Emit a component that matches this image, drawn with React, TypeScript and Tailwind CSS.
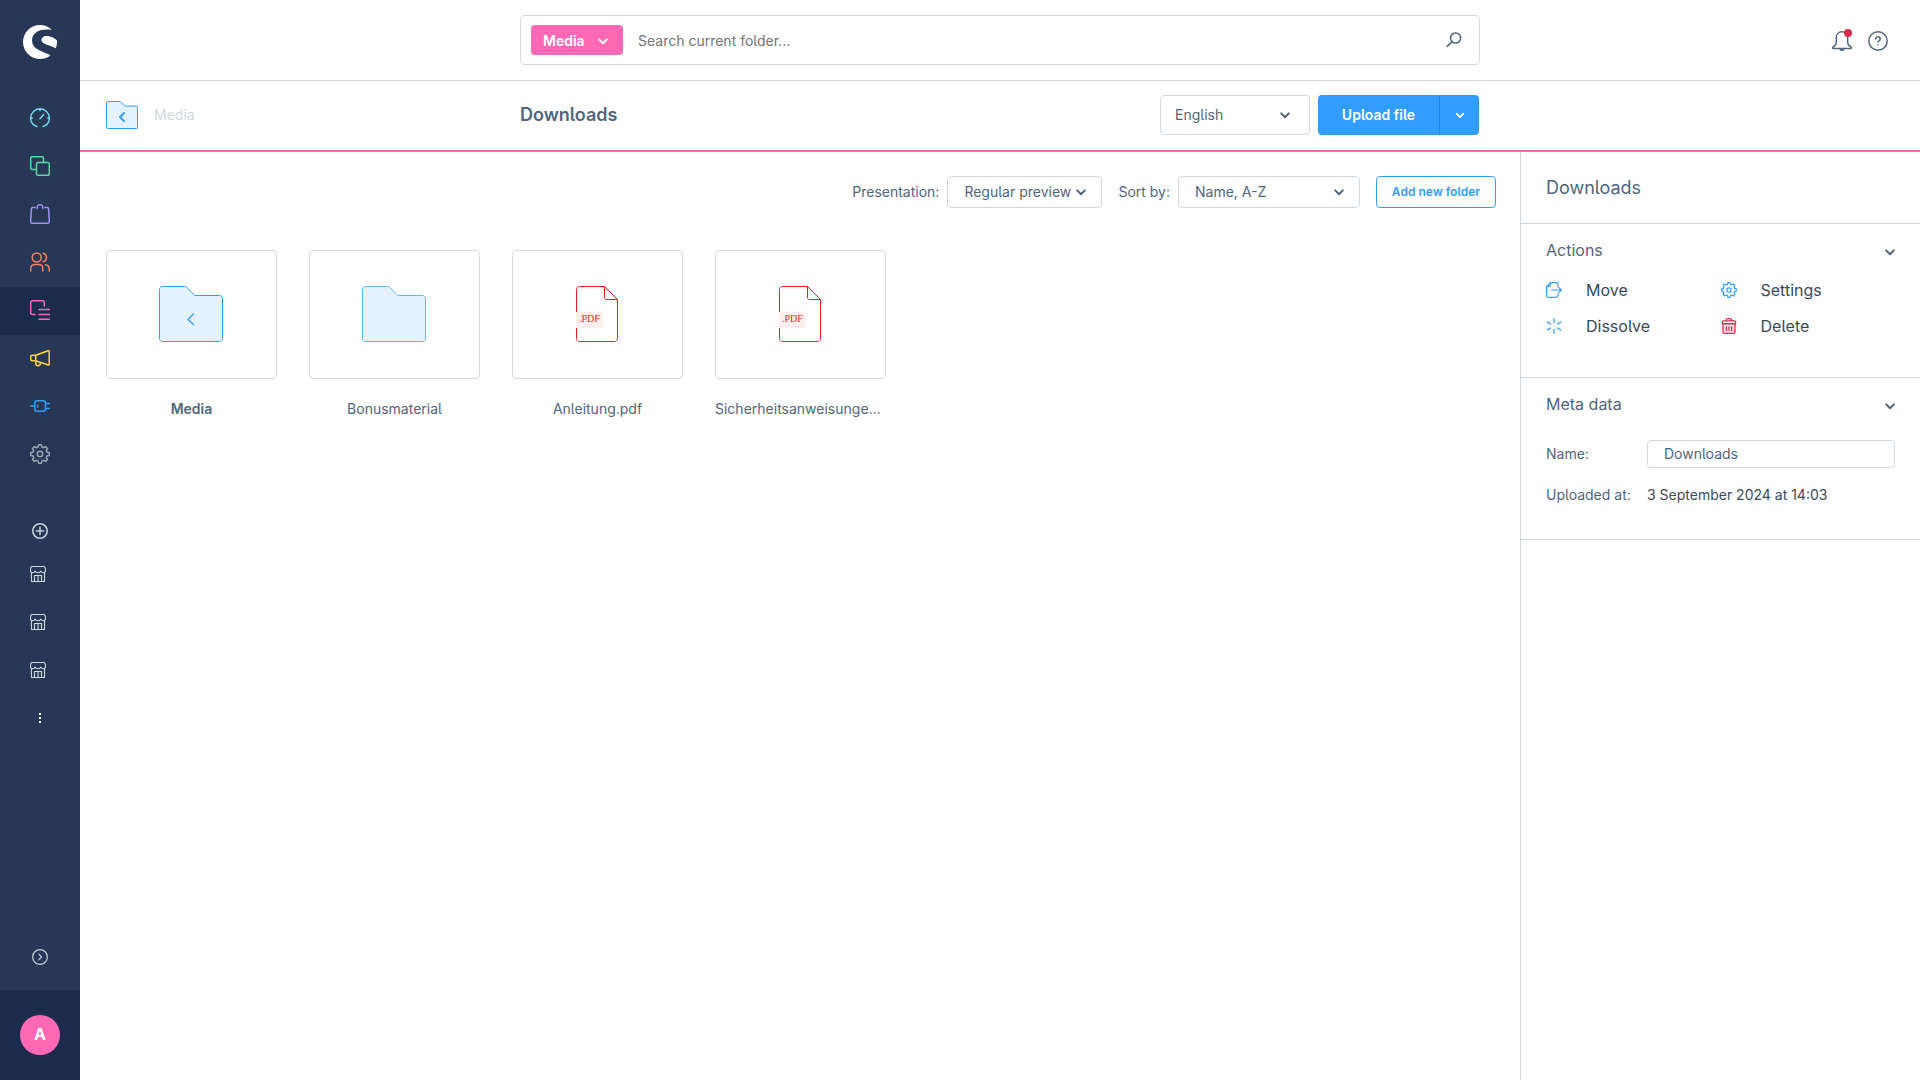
import type { ReactNode } from "react";
import { SiShopware } from "react-icons/si";

/* ---------- icons ---------- */

function Icon({ size = 20, stroke = 1.5, className = "", children }: { size?: number; stroke?: number; className?: string; children: ReactNode }) {
  return (
    <svg
      width={size}
      height={size}
      viewBox="0 0 20 20"
      fill="none"
      stroke="currentColor"
      strokeWidth={stroke}
      strokeLinecap="round"
      strokeLinejoin="round"
      aria-hidden="true"
      className={className}
    >
      {children}
    </svg>
  );
}

function Chevron({ className = "" }: { className?: string }) {
  return (
    <svg width="10" height="7" viewBox="0 0 10 7" fill="none" aria-hidden="true" className={className}>
      <path d="M1.2 1.4 5 5.2l3.8-3.8" stroke="currentColor" strokeWidth="2" strokeLinecap="round" strokeLinejoin="round" />
    </svg>
  );
}

// Eight-toothed cog, built once
const cogPath =
  Array.from({ length: 8 }, (_, i) => {
    const mid = (i * Math.PI) / 4;
    return [
      [-0.25, 7.3],
      [-0.15, 9.3],
      [0.15, 9.3],
      [0.25, 7.3],
    ].map(([a, r]) => `${(10 + r * Math.sin(mid + a)).toFixed(2)} ${(10 - r * Math.cos(mid + a)).toFixed(2)}`);
  })
    .flat()
    .reduce((d, p, i) => d + (i === 0 ? "M" : "L") + p, "") + "Z";

function Cog({ size = 20 }: { size?: number }) {
  return (
    <Icon size={size}>
      <path d={cogPath} />
      <circle cx="10" cy="10" r="2.7" />
    </Icon>
  );
}

function Store() {
  return (
    <svg width="16" height="16" viewBox="0 0 16 16" fill="none" stroke="currentColor" strokeWidth="1.1" strokeLinejoin="round" aria-hidden="true">
      <path d="M2.5.5h11c1.3 0 2 1.2 2 2.500v1.5c0 1.400-.9 2.200-2.200 2.200-1.100 0-1.900-.6-2.300-1.600-.5 1-1.500 1.600-3 1.600S5.500 6.100 5 5.100c-.4 1-1.200 1.600-2.300 1.600C1.400 6.700.5 5.900.5 4.500V3c0-1.300.7-2.500 2-2.500Z" />
      <path d="M1.5 6.500v9h13v-9M4.500 15.500v-6h7v6M8 9.500v6" />
    </svg>
  );
}

function FolderShape({ back = false, small = false }: { back?: boolean; small?: boolean }) {
  if (small) {
    return (
      <svg width="32" height="28" viewBox="0 0 32 28" fill="none" aria-hidden="true">
        <path d="M1.5.5h12.200c.4 0 .7.1 1 .4l3.600 3.700c.2.3.5.4.9.4h11.300c.6 0 1 .4 1 1v20.500c0 .6-.4 1-1 1h-29c-.6 0-1-.4-1-1v-25c0-.6.4-1 1-1Z" fill="#e4f2fe" stroke="#319eff" />
        <path d="m18 12-4 4 4 4" stroke="#319eff" strokeWidth="2" strokeLinecap="round" strokeLinejoin="round" />
      </svg>
    );
  }
  return (
    <svg width="64" height="56" viewBox="0 0 64 56" fill="none" aria-hidden="true">
      <path d="M3.5.5h22.200c.8 0 1.500.3 2.100.9l7.200 7.300c.5.5 1 .8 1.800.8h23.700c1.700 0 3 1.300 3 3v40c0 1.700-1.300 3-3 3h-57c-1.700 0-3-1.300-3-3v-49c0-1.700 1.300-3 3-3Z" fill="#e4f2fe" stroke={back ? "#319eff" : "#62b5fb"} />
      {back && <path d="m34.500 28-5.500 5.500 5.500 5" stroke="#319eff" strokeWidth="1.4" strokeLinecap="round" strokeLinejoin="round" />}
    </svg>
  );
}

function PdfFile() {
  return (
    <svg width="42" height="56" viewBox="0 0 42 56" fill="none" aria-hidden="true">
      <path d="M3.5.5h25l13 13v39c0 1.700-1.300 3-3 3h-35c-1.700 0-3-1.300-3-3v-49c0-1.700 1.300-3 3-3Z" stroke="#f01b1b" />
      <path d="M28.500.5v11c0 1.200.8 2 2 2h11" stroke="#f01b1b" />
      <path d="M0 26h25a2 2 0 0 1 2 2v12a2 2 0 0 1-2 2H0Z" fill="#ffefef" />
      <text x="3" y="36" fontSize="10" fill="#f01b1b" className="font-['Liberation_Serif',serif]">
        .PDF
      </text>
    </svg>
  );
}

/* ---------- sidebar ---------- */

const navItems = [
  {
    label: "Dashboard",
    color: "text-[#6ed5ea]",
    icon: (
      <Icon>
        <path d="M6.800 18.500C3 17.200.7 13.700.7 10a9.300 9.300 0 1 1 18.600 0c0 3.700-2.300 7.200-6.100 8.500M10 .7v2M.7 10h1.600M17.700 10h1.600M10 10.800l3.700-4.300" />
      </Icon>
    ),
  },
  {
    label: "Catalogues",
    color: "text-[#57d9a3]",
    icon: (
      <Icon>
        <path d="M6 13.500H2.200A1.500 1.500 0 0 1 .7 12V2.200A1.500 1.500 0 0 1 2.200.7H12a1.500 1.500 0 0 1 1.500 1.500V6" />
        <rect x="6.500" y="6.500" width="12.800" height="12.800" rx="1.500" />
      </Icon>
    ),
  },
  {
    label: "Orders",
    color: "text-[#a092f0]",
    icon: (
      <Icon>
        <path d="M5 3.500H2.800c-.8 0-1.400.6-1.400 1.400L.7 17.700c0 .9.6 1.600 1.500 1.600h15.600c.9 0 1.500-.7 1.500-1.600L18.600 4.900c0-.8-.6-1.400-1.400-1.400H15M7.300 4.500V3.200a2.700 2.700 0 0 1 5.400 0v1.300" />
      </Icon>
    ),
  },
  {
    label: "Customers",
    color: "text-[#f0845f]",
    icon: (
      <Icon>
        <circle cx="6.700" cy="5.500" r="4.500" />
        <path d="M.8 19v-2.500c0-2.500 1.500-4 4-4h4c2.500 0 4 1.500 4 4V19M13.200 1.200c2 .6 3.300 2.200 3.300 4.300s-1.300 3.700-3.300 4.300M15.500 12.700c2.300.3 3.700 1.800 3.700 4V19" />
      </Icon>
    ),
  },
  {
    label: "Content",
    color: "text-[#ff68b4]",
    active: true,
    icon: (
      <Icon>
        <path d="M5 14.500H2.500c-1 0-1.800-.8-1.800-1.800V2.500C.7 1.500 1.500.7 2.500.7h10c1 0 1.800.8 1.800 1.800V6M9 9.500h10.500M9 14.500h10.500M9 19.300h10.500" />
      </Icon>
    ),
  },
  {
    label: "Marketing",
    color: "text-[#ffd53d]",
    icon: (
      <Icon>
        <path d="M5.700 7.200H2c-.7 0-1.200.5-1.200 1.200v3.200c0 .7.5 1.200 1.200 1.200h3.700M5.700 7.200v5.600l12.400 4.200c.6.2 1.100-.1 1.100-.7V3.500c0-.6-.5-.9-1.100-.7L5.700 7.200ZM5.800 13v2.300c0 1.400.9 2.400 2.200 2.400s2.300-.9 2.500-2.700" />
      </Icon>
    ),
  },
  {
    label: "Extensions",
    color: "text-[#319eff]",
    icon: (
      <Icon>
        <path d="M.8 10h4M7 4.700h6.300c1.300 0 2.200.9 2.200 2.200v6.200c0 1.300-.9 2.200-2.200 2.200H7c-1.300 0-2.200-.9-2.200-2.200V6.900c0-1.300.9-2.200 2.200-2.200ZM15.500 7.500h3.800M15.500 12.500h3.800M7.700 9v2" />
      </Icon>
    ),
  },
  { label: "Settings", color: "text-[#9aa8b5]", icon: <Cog /> },
];

function Sidebar() {
  return (
    <aside className="flex w-20 shrink-0 flex-col bg-[#283756]">
      <a href="#home" aria-label="Shopware" className="flex h-[95px] justify-center pt-[25px] text-white">
        <SiShopware size={34} />
      </a>
      <nav className="flex flex-col">
        {navItems.map((item) => (
          <a
            key={item.label}
            href={`#${item.label.toLowerCase()}`}
            aria-label={item.label}
            className={`flex h-12 items-center justify-center pb-0.5 ${item.color} ${item.active ? "bg-[#1a2b4e]" : ""}`}
          >
            {item.icon}
          </a>
        ))}
      </nav>

      <div className="mt-8 flex flex-col text-[#d1d9e0]">
        <button type="button" aria-label="Add sales channel" className="flex h-10 items-center justify-center text-[#c3cfdc]">
          <Icon size={16} stroke={2}>
            <circle cx="10" cy="10" r="9" />
            <path d="M10 5.500v9M5.500 10h9" />
          </Icon>
        </button>
        {["Storefront", "Headless", "Product comparison"].map((name) => (
          <a key={name} href="#channel" aria-label={name} className="flex h-12 items-center pb-0.5 pl-[30px]">
            <Store />
          </a>
        ))}
        <button type="button" aria-label="More" className="flex h-12 items-center justify-center pb-0.5 text-white">
          <svg width="10" height="10" viewBox="0 0 10 10" fill="currentColor" aria-hidden="true">
            <path d="M4 0h2v2H4zM4 4h2v2H4zM4 8h2v2H4z" />
          </svg>
        </button>
      </div>

      <div className="mt-auto flex flex-col">
        <button type="button" aria-label="Expand menu" className="flex h-[66px] items-center justify-center text-[#c3cfdc]">
          <Icon size={16}>
            <circle cx="10" cy="10" r="9.2" />
            <path d="m8.500 6.500 3.500 3.500-3.500 3.500" />
          </Icon>
        </button>
        <div className="flex h-[90px] items-center justify-center bg-[#1a2b4e]">
          <button type="button" aria-label="User menu" className="h-10 w-10 rounded-full bg-[#ff68b4] pb-0.5 text-base font-bold text-white">
            A
          </button>
        </div>
      </div>
    </aside>
  );
}

/* ---------- header ---------- */

function TopBar() {
  return (
    <header className="grid h-[81px] grid-cols-[1fr_minmax(0,960px)_1fr] border-b border-[#d1d9e0]">
      <form role="search" className="col-start-2 mt-[15px] flex h-[50px] items-center rounded border border-[#d1d9e0] pr-[17px] pl-2.5">
        <button type="button" className="flex h-[30px] w-[92px] shrink-0 items-center justify-between rounded bg-[#ff68b4] pt-0.5 pr-[15px] pl-3 text-sm font-semibold text-white">
          Media
          <Chevron />
        </button>
        <input
          type="text"
          aria-label="Search"
          placeholder="Search current folder..."
          className="h-full min-w-0 flex-1 bg-transparent pl-[15px] text-sm outline-none placeholder:text-[#757575]"
        />
        <button type="submit" aria-label="Start search" className="text-[#52667a]">
          <Icon size={16} stroke={2}>
            <circle cx="12" cy="7.500" r="6.300" />
            <path d="m7.500 12-6 6" />
          </Icon>
        </button>
      </form>
      <div className="flex items-center justify-end gap-4 pt-0.5 pr-8 text-[#52667a]">
        <button type="button" aria-label="Notifications" className="relative">
          <Icon>
            <path d="M10 .8c-3.400 0-5.700 2.500-5.700 5.800v4.600c0 1.500-.6 2.700-1.800 3.700L.9 16.200c-.5.5-.2 1.300.5 1.300h17.200c.7 0 1-.8.5-1.300l-1.600-1.300c-1.200-1-1.800-2.200-1.800-3.700V6.600c0-3.300-2.300-5.800-5.700-5.800ZM8 17.700c.2 1 1 1.700 2 1.700s1.800-.7 2-1.700" />
          </Icon>
          <span className="absolute -top-0.5 right-0 h-2 w-2 rounded-full bg-[#de294c]" />
        </button>
        <button type="button" aria-label="Help">
          <Icon>
            <circle cx="10" cy="10" r="9.2" />
            <path d="M7.800 8c0-1.300.9-2.200 2.200-2.200s2.200.9 2.200 2.100c0 1.600-2.200 1.700-2.200 3.400M10 13.700v.1" />
          </Icon>
        </button>
      </div>
    </header>
  );
}

function SmartBar() {
  return (
    <div className="grid h-[71px] grid-cols-[1fr_minmax(0,960px)_1fr] items-center border-b-2 border-[#ff68b4] pb-px">
      <a href="#media" className="flex items-center gap-4 pl-[26px] text-sm text-[#d1d9e0]">
        <FolderShape small back />
        Media
      </a>
      <div className="flex items-center justify-between pr-px">
        <h1 className="text-lg font-semibold">Downloads</h1>
        <div className="flex gap-2">
          <Select label="Language" value="English" className="h-10 w-[150px] pl-3.5" chevron="right-5" />
          <div className="flex h-10 overflow-hidden rounded bg-[#319eff] text-sm font-semibold text-white">
            <button type="button" className="w-[121px]">Upload file</button>
            <button type="button" aria-label="More upload options" className="flex w-10 items-center justify-center border-l border-[#2085e0]">
              <Chevron className="scale-90" />
            </button>
          </div>
        </div>
      </div>
    </div>
  );
}

function Select({ id, label, value, className, chevron }: { id?: string; label?: string; value: string; className: string; chevron: string }) {
  return (
    <span className="relative inline-flex items-center">
      <select id={id} aria-label={label} className={`appearance-none rounded border border-[#d1d9e0] bg-white text-sm text-[#52667a] ${className}`}>
        <option>{value}</option>
      </select>
      <Chevron className={`pointer-events-none absolute ${chevron}`} />
    </span>
  );
}

/* ---------- media library ---------- */

function MediaItem({ name, bold = false, children }: { name: string; bold?: boolean; children: ReactNode }) {
  return (
    <a href="#item" className="w-[171px] text-center text-sm">
      <span className="flex h-[129px] items-center justify-center rounded border border-[#d1d9e0] pr-px pb-px">{children}</span>
      <span className={`mt-5 block truncate leading-5 ${bold ? "font-semibold" : ""}`}>{name}</span>
    </a>
  );
}

function Library() {
  return (
    <main className="min-w-0 flex-1 px-6 pt-6">
      <div className="flex items-center justify-end gap-4 text-sm">
        <div className="flex items-center gap-2">
          <label htmlFor="presentation">Presentation:</label>
          <Select id="presentation" value="Regular preview" className="h-8 w-[155px] pl-4" chevron="right-4" />
        </div>
        <div className="flex items-center gap-2">
          <label htmlFor="sorting">Sort by:</label>
          <Select id="sorting" value="Name, A-Z" className="h-8 w-[182px] pl-4" chevron="right-4" />
        </div>
        <button type="button" className="h-8 w-[120px] rounded border border-[#319eff] text-xs font-semibold text-[#319eff]">
          Add new folder
        </button>
      </div>

      <div className="mt-[42px] flex flex-wrap gap-8 pl-0.5">
        <MediaItem name="Media" bold>
          <FolderShape back />
        </MediaItem>
        <MediaItem name="Bonusmaterial">
          <FolderShape />
        </MediaItem>
        <MediaItem name="Anleitung.pdf">
          <PdfFile />
        </MediaItem>
        <MediaItem name="Sicherheitsanweisungen.pdf">
          <PdfFile />
        </MediaItem>
      </div>
    </main>
  );
}

/* ---------- details panel ---------- */

function Action({ label, color = "text-[#319eff]", children }: { label: string; color?: string; children: ReactNode }) {
  return (
    <button type="button" className="flex h-9 items-center gap-6 text-left text-base text-[#3d4a57]">
      <span className={color}>{children}</span>
      {label}
    </button>
  );
}

function PanelHeading({ children }: { children: ReactNode }) {
  return (
    <h3 className="flex items-center justify-between text-base leading-6">
      {children}
      <Chevron className="mt-1" />
    </h3>
  );
}

function DetailsPanel() {
  return (
    <aside className="w-[400px] shrink-0 border-l border-[#d1d9e0]">
      <h2 className="flex h-[72px] items-center border-b border-[#d1d9e0] pl-[25px] text-lg">Downloads</h2>

      <section className="border-b border-[#d1d9e0] px-[25px] pt-3.5 pb-[33px]">
        <PanelHeading>Actions</PanelHeading>
        <div className="mt-2.5 grid grid-cols-2">
          <Action label="Move">
            <Icon size={16}>
              <path d="M15 5.500V2.700c0-1.100-.8-1.900-1.900-1.900H5.500L.8 5.500v11.800c0 1.100.8 1.900 1.900 1.900h10.400c1.100 0 1.900-.8 1.900-1.900v-2.500M5.500.8v3.500c0 .7-.5 1.200-1.200 1.200H.8M7 10h12.200M15.800 6.700l3.400 3.300-3.400 3.300" />
            </Icon>
          </Action>
          <Action label="Settings">
            <Cog size={16} />
          </Action>
          <Action label="Dissolve">
            <Icon size={16} stroke={1.6}>
              <path d="M10 .8v5M10 14.200v5M1.500 5.100l4.200 2.400M14.300 12.500l4.200 2.400M18.500 5.100l-4.200 2.400M5.700 12.500l-4.200 2.400" />
            </Icon>
          </Action>
          <Action label="Delete" color="text-[#de294c]">
            <Icon size={16} stroke={1.6}>
              <path d="M2.500 7h15v10.500c0 1-.7 1.700-1.700 1.700H4.200c-1 0-1.700-.7-1.700-1.700V7Z" fill="#fbe5ea" />
              <path d="M3 3.500h14c.8 0 1.300.5 1.300 1.200V7H1.700V4.700c0-.7.5-1.200 1.300-1.200ZM6.500 3.300c0-1.500.8-2.500 2-2.500h3c1.200 0 2 1 2 2.500M6.700 11v4.500M10 11v4.500M13.300 11v4.500" />
            </Icon>
          </Action>
        </div>
      </section>

      <section className="border-b border-[#d1d9e0] px-[25px] pt-3.5 pb-8">
        <PanelHeading>Meta data</PanelHeading>
        <dl className="mt-6 grid grid-cols-[101px_1fr] items-center gap-y-[15px] text-sm">
          <dt>
            <label htmlFor="folder-name">Name:</label>
          </dt>
          <dd>
            <input id="folder-name" type="text" defaultValue="Downloads" className="block h-7 w-full rounded border border-[#d1d9e0] px-4 pb-0.5 text-sm text-[#52667a]" />
          </dd>
          <dt className="leading-6">Uploaded at:</dt>
          <dd className="leading-6 text-[#3d4a57]">3 September 2024 at 14:03</dd>
        </dl>
      </section>
    </aside>
  );
}

export default function App() {
  return (
    <div className="flex min-h-screen bg-white font-[Inter,sans-serif] text-[#52667a] [font-feature-settings:'cv05']">
      <Sidebar />
      <div className="flex min-w-0 flex-1 flex-col">
        <TopBar />
        <SmartBar />
        <div className="flex flex-1">
          <Library />
          <DetailsPanel />
        </div>
      </div>
    </div>
  );
}
